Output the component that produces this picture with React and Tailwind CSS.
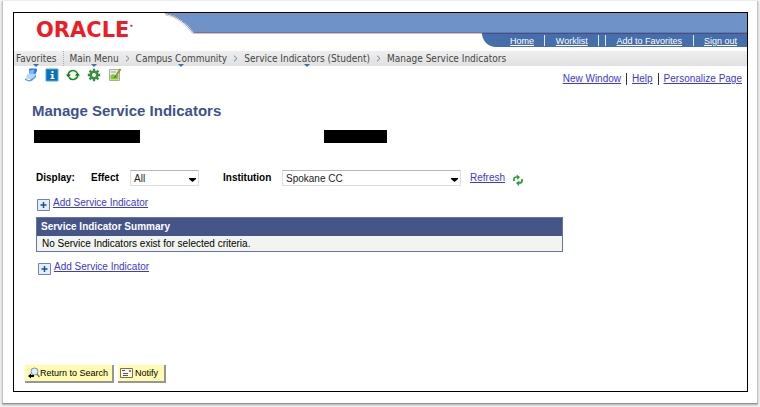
import React from "react";

function MenuMark() {
  return (
    <svg viewBox="0 0 6 3" className="absolute left-1/2 top-[12px] h-[3px] w-[6px] -translate-x-1/2" aria-hidden="true">
      <path d="M0 0h6L3 3z" fill="#3573b5" />
    </svg>
  );
}

function Chevron() {
  return (
    <svg viewBox="0 0 5 7" className="h-[7px] w-[5px]" aria-hidden="true">
      <path d="M1 .7l3 2.8-3 2.8" fill="none" stroke="#6d7f99" />
    </svg>
  );
}

function HeaderSeparator() {
  return <span className="h-[11px] w-px bg-[#dfe8f5]" />;
}

function Breadcrumbs() {
  return (
    <nav aria-label="Breadcrumb" className="mt-[4px] flex h-[15px] items-center bg-gradient-to-b from-[#eeeeee] to-[#e1e1e1] pl-[2px] font-['DejaVu_Sans_Condensed','DejaVu_Sans',sans-serif] text-[10px] leading-[14px] text-[#454545]">
      <a href="#favorites" className="relative">Favorites<MenuMark /></a>
      <span className="ml-[6px] h-[15px] border-l border-dotted border-[#aaaaaa]" />
      <div className="ml-[6px] flex items-center gap-[6px]">
        <a href="#menu" className="relative">Main Menu<MenuMark /></a>
        <Chevron />
        <a href="#campus" className="relative">Campus Community<MenuMark /></a>
        <Chevron />
        <a href="#service" className="relative">Service Indicators (Student)<MenuMark /></a>
        <Chevron />
        <a href="#manage">Manage Service Indicators</a>
      </div>
    </nav>
  );
}

function Header() {
  return (
    <header className="flex h-[34px]">
      <div className="w-[151px] shrink-0 pl-[22px] pt-[6px]">
        <div className="flex font-['DejaVu_Sans',sans-serif] text-[21px] font-bold leading-[22px] text-[#ee1c25]">
          ORACLE<span className="text-[6px] leading-[14px]">•</span>
        </div>
      </div>
      <svg viewBox="0 0 30 22" className="h-[22px] w-[30px] shrink-0" aria-hidden="true">
        <path d="M0 0h30v19H28.500C22 11 14 3 0 0z" fill="#6f93c8" />
        <path d="M0 .5C14 3.500 21 11 28 19.500h2" fill="none" stroke="#8b88a4" />
        <path d="M0 2C13 4 20 12 27.500 20.500H30" fill="none" stroke="#d7d3d3" />
      </svg>
      <div className="flex flex-1 flex-col">
        <div className="h-[20px] border-b border-[#77739c] bg-[#6f93c8]" />
        <div className="flex">
          <div className="h-px flex-1 bg-[#c9c5c8]" />
          <nav aria-label="Account" className="flex h-[14px] w-[265px] items-center justify-between rounded-bl-[14px] border-t border-[#385292] bg-[#456ead] pl-[28px] pr-[10px] font-['Liberation_Sans',Arial,sans-serif] text-[9px] leading-[12px] text-white">
            <a href="#home" className="underline">Home</a>
            <HeaderSeparator />
            <a href="#worklist" className="underline">Worklist</a>
            <span className="flex gap-[6px]"><HeaderSeparator /><HeaderSeparator /></span>
            <a href="#add" className="underline">Add to Favorites</a>
            <HeaderSeparator />
            <a href="#signout" className="underline">Sign out</a>
          </nav>
        </div>
      </div>
    </header>
  );
}

function IconButton({ label, children }) {
  return (
    <button type="button" aria-label={label} className="h-[14px] w-[14px]">
      <svg viewBox="0 0 14 14" className="h-[14px] w-[14px]">{children}</svg>
    </button>
  );
}

function Toolbar() {
  return (
    <div className="flex gap-[7px] pl-[10px] pt-[2px]">
      <IconButton label="Notes">
        <path d="M5 1.500Q5 .5 6.500.5H12Q13.500.5 13 2.500L11.500 6 5.500 7z" fill="#2477ef" />
        <path d="M5.500 2.500l5-1-1 4-4 1.500z" fill="#7fb5ff" />
        <path d="M3 6.500l7-1 2 2-3 4-7-1z" fill="#b8d6fb" />
        <path d="M1 10.500l4 1.800 5-3 2-3v3l-4 3.500-3 .7-4-1.500z" fill="#5a9bf2" />
      </IconButton>
      <IconButton label="Information">
        <path d="M1 1h12v12H1z" fill="#0872b9" stroke="#56a3d6" />
        <path d="M6.500 3h2v2h-2zM5.500 6h3v4h1v1h-4v-1h1V7h-1z" fill="#fff" />
      </IconButton>
      <IconButton label="Reload">
        <path d="M2.300 7.500A4.700 4.700 0 0 1 11 4.800M11.700 6.500A4.700 4.700 0 0 1 3 9.200" fill="none" stroke="#159015" strokeWidth="1.700" />
        <path d="M0 6.500h5L2.400 9.500zM9 7.500h5l-2.600-3z" fill="#087a08" />
      </IconButton>
      <IconButton label="Settings">
        <path d="M7 .8v12.400M.8 7h12.400M2.600 2.600l8.800 8.800M11.400 2.600l-8.800 8.800" stroke="#358b3d" strokeWidth="2.300" />
        <circle cx="7" cy="7" r="3.300" fill="#fff" stroke="#3a9143" strokeWidth="2.600" />
      </IconButton>
      <IconButton label="Edit page">
        <path d="M1.500 1.500h10v11h-10z" fill="#eef1e8" stroke="#a6aca0" />
        <path d="M2.500 7l3-1 2 1.500 3-1v5h-8z" fill="#83c92e" />
        <path d="M3 4h5" stroke="#80a4b0" />
        <path d="M12.500 1L7.500 8.500" stroke="#8d9835" strokeWidth="2" />
        <path d="M7.500 8l-1 2" stroke="#444" />
      </IconButton>
    </div>
  );
}

function SelectBox({ id, value, className }) {
  return (
    <div className={"relative " + className}>
      <select id={id} defaultValue={value} className="block h-[16px] w-full appearance-none rounded-[1px] border border-[#dcdde5] border-t-[#b5b6c2] bg-white pl-[3px] text-[10px] leading-[13px] text-[#222222]">
        <option>{value}</option>
      </select>
      <svg viewBox="0 0 7 4" className="pointer-events-none absolute right-[3px] top-[8px] h-[4px] w-[7px]" aria-hidden="true">
        <path d="M0 0h7v1L3.500 4 0 1z" fill="#000" />
      </svg>
    </div>
  );
}

function AddIndicator() {
  return (
    <a href="#add-indicator" className="flex w-fit items-start gap-[3px] leading-[13px] text-[#4038d0]">
      <svg viewBox="0 0 13 12" className="mt-[3px] h-[12px] w-[13px]" aria-hidden="true">
        <path d="M.5.5h12v11H.5z" fill="#e2f0fb" stroke="#7480b4" />
        <path d="M3.500 6h6M6.500 3v6" stroke="#254b9b" strokeWidth="1.500" />
      </svg>
      <span className="underline">Add Service Indicator</span>
    </a>
  );
}

export default function App() {
  return (
    <div className="flex min-h-screen bg-[#f4f4f4] px-[2px] pb-[3px] pt-px font-['Liberation_Sans',Arial,sans-serif] text-[10px] text-black">
      <div className="flex flex-1 border-b border-l border-r border-b-[#929292] border-l-[#c4c4c4] border-r-[#c4c4c4] bg-white pb-[11px] pl-[10px] pr-[9px] pt-[11px] shadow-[0_1px_2px_#aaaaaa]">
        <div className="flex min-w-0 flex-1 flex-col border border-black">
          <Header />
          <Breadcrumbs />
          <div className="flex items-start justify-between">
            <Toolbar />
            <nav aria-label="Page" className="flex items-center gap-[5px] pr-[5px] pt-[6px] text-[10px] leading-[13px] text-[#4038d0]">
              <a href="#window" className="underline">New Window</a>
              <span className="h-[12px] w-px bg-[#303050]" />
              <a href="#help" className="underline">Help</a>
              <span className="h-[12px] w-px bg-[#303050]" />
              <a href="#personalize" className="underline">Personalize Page</a>
            </nav>
          </div>
          <main className="flex flex-1 flex-col pl-[18px]">
            <h1 className="mt-[16px] text-[15px] font-bold leading-[20px] text-[#40528c]">Manage Service Indicators</h1>
            <div className="ml-[2px] mt-[9px] flex gap-[184px]">
              <div className="h-[13px] w-[106px] bg-black" />
              <div className="h-[13px] w-[63px] bg-black" />
            </div>
            <form className="ml-[4px] mt-[27px] flex items-center text-[10px] leading-[14px]">
              <strong className="w-[55px]">Display:</strong>
              <label htmlFor="effect" className="w-[39px] font-bold">Effect</label>
              <SelectBox id="effect" value="All" className="w-[69px]" />
              <label htmlFor="institution" className="ml-[24px] w-[59px] font-bold">Institution</label>
              <SelectBox id="institution" value="Spokane CC" className="w-[179px]" />
              <a href="#refresh" className="ml-[9px] text-[#4038d0] underline">Refresh</a>
              <button type="button" aria-label="Refresh indicators" className="ml-[7px] mt-[3px]">
                <svg viewBox="0 0 12 12" className="h-[12px] w-[12px]">
                  <path d="M2 7V5Q2 3 5 3M10 5v2Q10 9 7 9" fill="none" stroke="#2c9a34" strokeWidth="1.700" />
                  <path d="M4.500 .5l3.500 2.500-2.500 3zM7.500 6.500l-3.500 2.500L7 12z" fill="#2c9a34" />
                </svg>
              </button>
            </form>
            <div className="ml-[5px] mt-[10px]"><AddIndicator /></div>
            <table className="ml-[4px] mt-[6px] w-[527px] border-collapse border border-[#6674a6] text-left text-[10px] leading-[15px]">
              <thead><tr><th className="h-[18px] bg-[#465587] pl-[4px] font-bold text-white">Service Indicator Summary</th></tr></thead>
              <tbody><tr><td className="h-[16px] bg-[#f2f4ef] pl-[5px]">No Service Indicators exist for selected criteria.</td></tr></tbody>
            </table>
            <div className="ml-[6px] mt-[8px]"><AddIndicator /></div>
            <div className="-ml-[7px] mb-[8px] mt-auto flex gap-[4px] text-[9px] leading-[14px]">
              <button type="button" className="flex h-[18px] items-center border-b-2 border-r-2 border-[#969696] bg-[#fffbb0] pl-[3px] pr-[4px]">
                <svg viewBox="0 0 12 12" className="h-[12px] w-[12px]" aria-hidden="true">
                  <circle cx="6.500" cy="4.500" r="3.500" fill="#d9f1ff" stroke="#7792b5" />
                  <path d="M9 7l2.500 3" stroke="#8c6d7b" strokeWidth="1.500" />
                  <path d="M0 9l3-2.500V8h3v2H3v1.500z" fill="#000" />
                </svg>
                Return to Search
              </button>
              <button type="button" className="flex h-[18px] items-center gap-[2px] border-b-2 border-r-2 border-[#969696] bg-[#fffbb0] pl-[2px] pr-[6px]">
                <svg viewBox="0 0 13 10" className="h-[10px] w-[13px]" aria-hidden="true">
                  <path d="M.5.5h12v9H.5z" fill="#fbf8e8" stroke="#736f68" />
                  <path d="M2 2.500h3M3 5.500h5M3 7.500h5" stroke="#555" />
                  <path d="M9 2h2v2H9z" fill="#cc5e5e" />
                </svg>
                Notify
              </button>
            </div>
          </main>
        </div>
      </div>
    </div>
  );
}
